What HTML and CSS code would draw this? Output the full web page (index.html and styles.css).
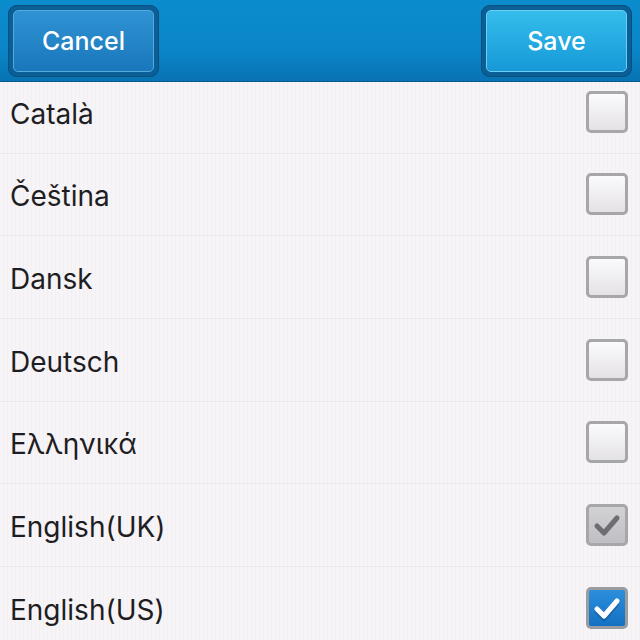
FILE: index.html
```html
<!DOCTYPE html>
<html lang="en">
<head>
  <meta charset="UTF-8" />
  <title>Languages</title>
  <link rel="stylesheet" href="styles.css">
</head>
<body>
  <header class="title-bar">
    <div class="btn-frame"><button class="btn btn-cancel">Cancel</button></div>
    <div class="btn-frame"><button class="btn btn-save">Save</button></div>
  </header>

  <ul class="lang-list">
    <li class="lang-row"><span class="lang-name">Català</span><span class="check"></span></li>
    <li class="lang-row"><span class="lang-name">Čeština</span><span class="check"></span></li>
    <li class="lang-row"><span class="lang-name">Dansk</span><span class="check"></span></li>
    <li class="lang-row"><span class="lang-name">Deutsch</span><span class="check"></span></li>
    <li class="lang-row"><span class="lang-name">Ελληνικά</span><span class="check"></span></li>
    <li class="lang-row">
      <span class="lang-name">English(UK)</span>
      <span class="check check-locked">
        <svg viewBox="0 0 36 36" width="36" height="36"><path d="M8 19 L15 26 L28 11" fill="none" stroke="#6e6e72" stroke-width="5" stroke-linecap="round" stroke-linejoin="round"/></svg>
      </span>
    </li>
    <li class="lang-row">
      <span class="lang-name">English(US)</span>
      <span class="check check-on">
        <svg viewBox="0 0 36 36" width="36" height="36"><path d="M8 20 L15 27 L28 12" fill="none" stroke="#0d4f86" stroke-opacity="0.5" stroke-width="5" stroke-linecap="round" stroke-linejoin="round" transform="translate(0 1.5)"/><path d="M8 19 L15 26 L28 11" fill="none" stroke="#ffffff" stroke-width="5" stroke-linecap="round" stroke-linejoin="round"/></svg>
      </span>
    </li>
  </ul>
</body>
</html>
```

FILE: styles.css
```css
body {
  margin: 0;
  font-family: 'Inter', 'DejaVu Sans', sans-serif;
  background-color: #f7f4f8;
  overflow: hidden;
}

.title-bar {
  position: relative;
  z-index: 2;
  height: 81px;
  display: flex;
  justify-content: space-between;
  align-items: center;
  padding: 0 8px;
  background: linear-gradient(to bottom, #0b8ccc, #0a86c8 60%, #0873b2);
  border-bottom: 1px solid #0a5b8e;
}

.btn-frame {
  padding: 5px;
  border-radius: 9px;
  background-color: #0b5f97;
  box-shadow: inset 0 0 0 1px #0a4f80;
}

.btn {
  display: block;
  width: 141px;
  height: 62px;
  padding-top: 2px;
  border: 1px solid #57a9dc;
  border-radius: 5px;
  color: #ffffff;
  font-family: inherit;
  font-size: 25px;
  font-weight: 500;
  cursor: pointer;
}

.btn-cancel {
  background: linear-gradient(to bottom, #2f93d3, #1977bb);
}

.btn-save {
  border-color: #6fcdf2;
  background: linear-gradient(to bottom, #35bdec, #1699d7);
}

.lang-list {
  list-style: none;
  margin: -11px 0 0;
  padding: 0;
  background-image: repeating-linear-gradient(to right, #f7f4f8 0, #f7f4f8 3px, #f3f0f4 3px, #f3f0f4 4px);
}

.lang-row {
  height: 81.67px;
  display: flex;
  align-items: center;
  justify-content: space-between;
  padding: 0 12px 0 10px;
  border-bottom: 1px solid #ebe7ec;
  color: #1e1e22;
  font-size: 28px;
}

.lang-name {
  padding-top: 4px;
}

.check {
  box-sizing: border-box;
  width: 42px;
  height: 42px;
  display: flex;
  align-items: center;
  justify-content: center;
  border: 3px solid #a7a6a9;
  border-radius: 5px;
  background: linear-gradient(to bottom, #fbfafc, #e4e2e6);
}

.check-locked {
  background: linear-gradient(to bottom, #d2d1d4, #bfbec2);
}

.check-on {
  border-color: #9a9ca0;
  background: linear-gradient(to bottom, #2b8fdc, #1570c2);
}
```
